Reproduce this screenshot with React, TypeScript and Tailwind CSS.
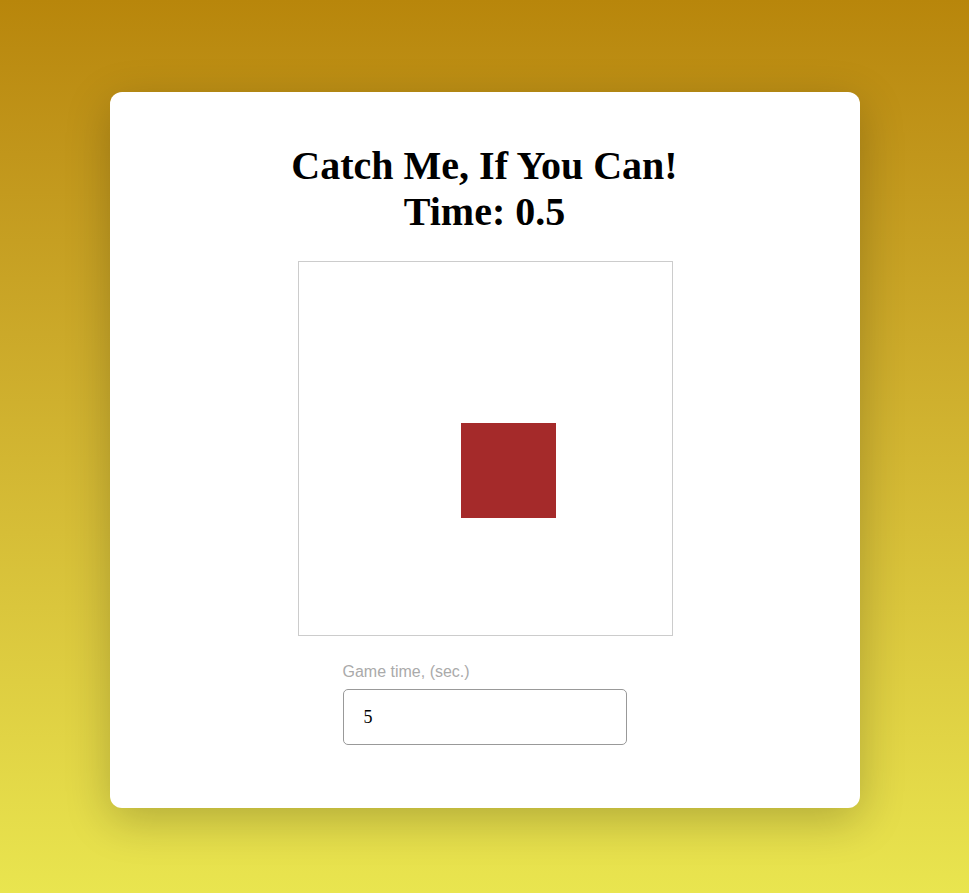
import { useState } from "react";

export default function App() {
  const [gameTime, setGameTime] = useState("5");
  const targetPosition = { left: 162, top: 161 };

  return (
    <div className="min-h-screen w-full bg-gradient-to-b from-[#b8860b] to-[#e9e54f] pt-[92px] pb-[85px]">
      <div className="mx-auto w-[750px] rounded-xl bg-white pt-[51px] pb-[63px] shadow-[0_12px_45px_rgba(0,0,0,0.22)]">
        <h1 className="text-center font-['Liberation_Serif',serif] text-[40px] font-bold leading-[46px] text-black">
          Catch Me, If You Can!
          <br />
          Time: 0.5
        </h1>

        <div className="relative mx-auto mt-[26px] h-[375px] w-[375px] translate-x-px border border-[#cccccc]">
          <div
            className="absolute h-[95px] w-[95px] bg-[#a52a2a]"
            style={{ left: targetPosition.left, top: targetPosition.top }}
          />
        </div>

        <div className="mx-auto mt-[27px] w-[284px]">
          <label className="block font-['Liberation_Sans',sans-serif] text-base leading-[18px] text-[#aaaaaa]">
            Game time, (sec.)
          </label>
          <input
            type="text"
            value={gameTime}
            onChange={(event) => setGameTime(event.target.value)}
            className="mt-2 h-[56px] w-full rounded-[5px] border border-[#999999] px-5 font-['Liberation_Serif',serif] text-lg text-black outline-none"
          />
        </div>
      </div>
    </div>
  );
}
